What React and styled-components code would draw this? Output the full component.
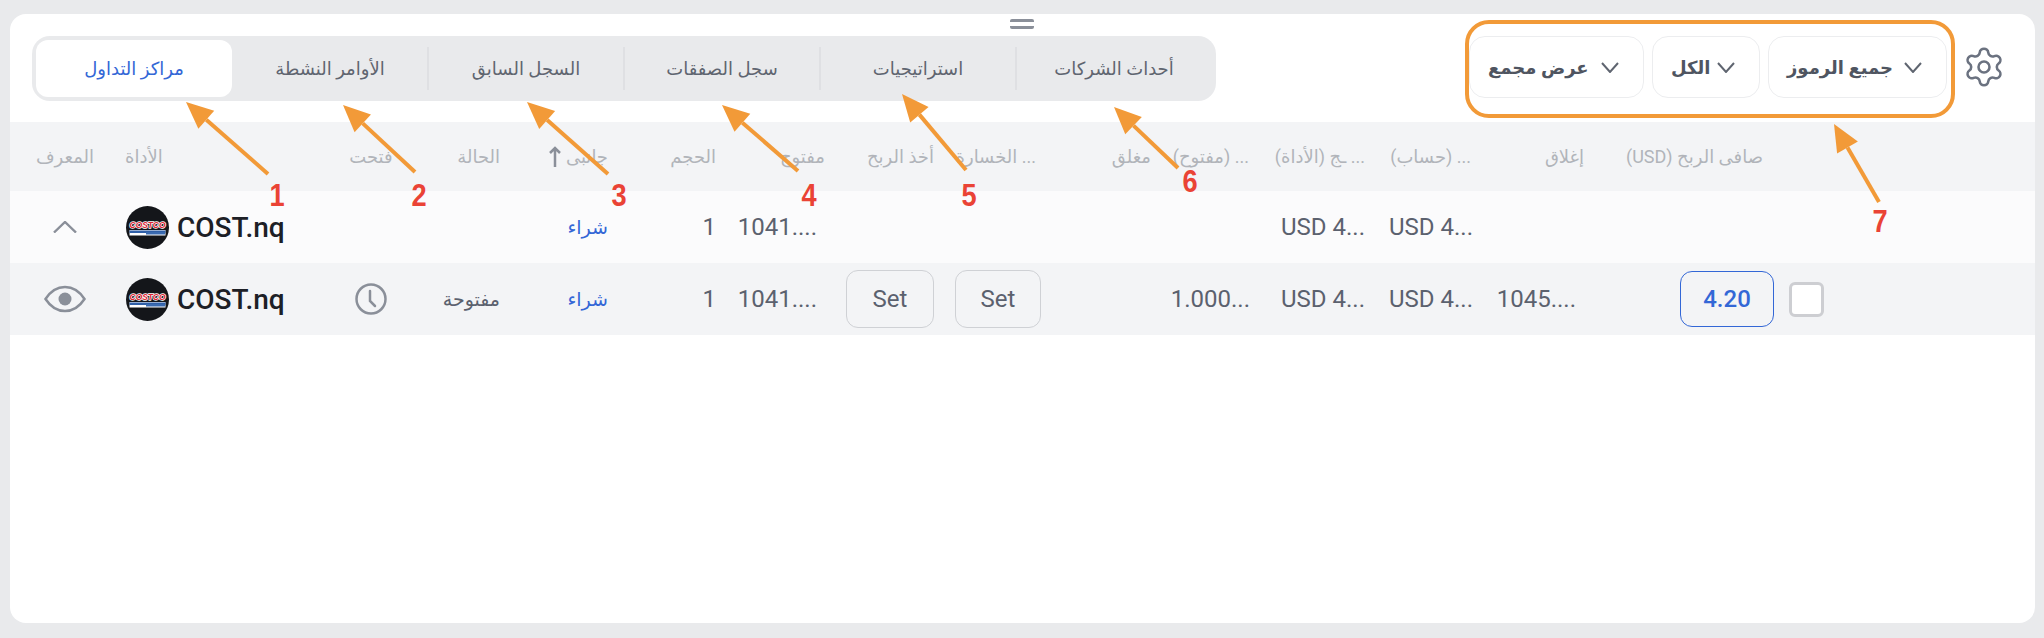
import React from "react";
import styled, { createGlobalStyle } from "styled-components";
import { Settings } from "lucide-react";

const Global = createGlobalStyle`
  html, body { margin: 0; padding: 0; background: #e9eaec; }
  body { font-family: Roboto, "Noto Sans", "DejaVu Sans", sans-serif; }
`;

const TRACKS = "110px 210px 82px 88px 108px 108px 109px 109px 107px 110px 99px 115px 108px 111px 190px 1fr";

const Page = styled.div`
  position: relative;
  width: 2044px;
  height: 638px;
  padding: 14px 9px 15px 10px;
  box-sizing: border-box;
  overflow: hidden;
`;
const Card = styled.main`
  position: relative;
  height: 100%;
  background: #fff;
  border-radius: 16px;
  overflow: hidden;
`;
const Handle = styled.div`
  position: absolute;
  top: 5px;
  left: 1000px;
  width: 24px;
  height: 10px;
  border-top: 3px solid #8a8f99;
  border-bottom: 3px solid #8a8f99;
  border-radius: 2px;
  box-sizing: border-box;
`;
const TopBar = styled.div`
  display: flex;
  align-items: flex-start;
  height: 108px;
  padding: 22px 29px 0 22px;
  box-sizing: border-box;
`;
const Tabs = styled.nav`
  display: flex;
  padding: 4px;
  background: #e9eaec;
  border-radius: 18px;
`;
const Tab = styled.div`
  position: relative;
  width: 196px;
  height: 57px;
  display: flex;
  align-items: center;
  justify-content: center;
  font-size: 18px;
  border-radius: 12px;
  color: ${p => (p.$active ? "#3367d6" : "#5f6570")};
  background: ${p => (p.$active ? "#fff" : "transparent")};
  &::after {
    content: "";
    display: ${p => (p.$sep ? "block" : "none")};
    position: absolute;
    right: -1px;
    top: 7px;
    bottom: 7px;
    width: 2px;
    background: #dfe0e3;
  }
`;
const Filters = styled.div`
  display: flex;
  gap: 8px;
  margin-left: auto;
`;
const Filter = styled.div`
  width: ${p => p.$w}px;
  height: 62px;
  display: flex;
  align-items: center;
  justify-content: space-between;
  padding: 0 24px 0 18px;
  box-sizing: border-box;
  border: 1px solid #ecedef;
  border-radius: 16px;
  font-size: 18px;
  font-weight: 700;
  white-space: nowrap;
  color: #4f5561;
`;
const Gear = styled.div`
  display: flex;
  margin: 9px 0 0 15px;
  color: #6b7280;
`;
const Row = styled.div`
  display: grid;
  grid-template-columns: ${TRACKS};
  align-items: center;
  height: ${p => p.$h}px;
  background: ${p => p.$bg};
`;
const Cell = styled.div`
  display: flex;
  align-items: center;
  justify-content: ${p => p.$j || "flex-end"};
  padding-right: ${p => p.$pr || 0}px;
  padding-left: ${p => p.$pl || 0}px;
  white-space: nowrap;
  min-width: 0;
`;
const HeadText = styled.span`
  font-size: 18px;
  color: #b1b4ba;
`;
const SortArrow = styled.svg`
  width: 14px;
  height: 24px;
  margin-right: 4px;
`;
const Value = styled.span`
  font-size: 24px;
  color: #5b616e;
`;
const Side = styled.span`
  font-size: 19px;
  color: #3367d6;
`;
const Status = styled.span`
  font-size: 19px;
  color: #5b616e;
`;
const Symbol = styled.span`
  margin-left: 8px;
  font-size: 28px;
  font-weight: 500;
  color: #1d2026;
`;
const SetButton = styled.div`
  width: ${p => p.$w}px;
  height: 58px;
  display: flex;
  align-items: center;
  justify-content: center;
  box-sizing: border-box;
  border: 1px solid #cfd1d5;
  border-radius: 12px;
  font-size: 24px;
  color: #5b616e;
`;
const Profit = styled.div`
  width: 94px;
  height: 56px;
  display: flex;
  align-items: center;
  justify-content: center;
  box-sizing: border-box;
  border: 1px solid #3367d6;
  border-radius: 12px;
  font-size: 24px;
  font-weight: 500;
  color: #3367d6;
`;
const Check = styled.div`
  width: 35px;
  height: 35px;
  box-sizing: border-box;
  background: #fff;
  border: 3px solid #cdced2;
  border-radius: 6px;
`;
const Overlay = styled.svg`
  position: absolute;
  inset: 0;
  width: 2044px;
  height: 638px;
  pointer-events: none;
`;
const Callout = styled.div`
  position: absolute;
  left: 1465px;
  top: 20px;
  width: 490px;
  height: 98px;
  box-sizing: border-box;
  border: 4px solid #f29a38;
  border-radius: 24px;
  pointer-events: none;
`;
const Mark = styled.span`
  position: absolute;
  left: ${p => p.$x - 20}px;
  top: ${p => p.$y - 20}px;
  width: 40px;
  height: 40px;
  line-height: 40px;
  text-align: center;
  font-family: "Liberation Sans", sans-serif;
  font-size: 32px;
  font-weight: 700;
  color: #ea4335;
  transform: scaleX(0.85);
`;
const LogoMark = styled.svg`
  flex: none;
  width: 43px;
  height: 43px;
`;

const Logo = () => (
  <LogoMark viewBox="0 0 43 43">
    <circle cx="21.5" cy="21.5" r="21.5" fill="#14161a" />
    <text x="21.5" y="22" textAnchor="middle" fontFamily="Liberation Sans, sans-serif" fontStyle="italic" fontWeight="700" fontSize="8.4" fill="#dc2230" stroke="#fff" strokeWidth="1.4" paintOrder="stroke">COSTCO</text>
    <rect x="3.500" y="24" width="36" height="5.500" fill="#fff" />
    <rect x="3.500" y="24.500" width="36" height="2.500" fill="#2f5fa8" />
    <rect x="20" y="26" width="19" height="2.500" fill="#3a6ab0" />
  </LogoMark>
);
const ChevronUp = () => (
  <svg width="24" height="12" viewBox="0 0 24 12"><path d="M1 11.500 12 1l11 10.500" fill="none" stroke="#8a8f99" strokeWidth="2.400" /></svg>
);
const Eye = () => (
  <svg width="42" height="28" viewBox="0 0 42 28">
    <path d="M1.500 14C7 5.500 13.500 2 21 2s14 3.500 19.500 12C35 22.500 28.500 26 21 26S7 22.500 1.500 14Z" fill="none" stroke="#8a8f99" strokeWidth="2.500" />
    <circle cx="21" cy="14" r="6.500" fill="#8a8f99" />
  </svg>
);
const Clock = () => (
  <svg width="32" height="32" viewBox="0 0 32 32" fill="none" stroke="#8a8f99" strokeWidth="2.500">
    <circle cx="16" cy="16" r="14.500" />
    <path d="M15 8v10l5 5" strokeLinecap="round" />
  </svg>
);
const Chevron = () => (
  <svg width="18" height="11" viewBox="0 0 18 11" style={{ flex: "none" }}><path d="M1 1l8 9 8-9" fill="none" stroke="#5f6570" strokeWidth="2" /></svg>
);

const arrows = [
  [268, 174, 186, 102], [415, 172, 343, 105], [608, 174, 527, 102],
  [798, 171, 722, 105], [966, 170, 902, 94], [1178, 168, 1114, 107], [1879, 202, 1834, 124],
];
const marks = [[1, 277, 195], [2, 419, 195], [3, 619, 195], [4, 809, 195], [5, 969, 195], [6, 1190, 181], [7, 1880, 221]];

const Arrow = ({ a }) => {
  const [x1, y1, x2, y2] = a;
  const len = Math.hypot(x2 - x1, y2 - y1);
  const ux = (x2 - x1) / len, uy = (y2 - y1) / len;
  const bx = x2 - ux * 27, by = y2 - uy * 27;
  const head = `${x2},${y2} ${bx - uy * 12},${by + ux * 12} ${bx + uy * 12},${by - ux * 12}`;
  return (
    <g>
      <line x1={x1} y1={y1} x2={bx} y2={by} stroke="#f29a38" strokeWidth="4" />
      <polygon points={head} fill="#f29a38" />
    </g>
  );
};

const heads = [
  ["المعرف", "center"], ["الأداة", "flex-start", 0, 5], ["فتحت", "center"], ["الحالة"], ["جانبى"], ["الحجم"], ["مفتوح"],
  ["أخذ الربح"], ["الخسارة ...", "flex-end", 5], ["مغلق"], ["(مفتوح) ...", "flex-end", 1], ["ـج (الأداة) ...", "flex-end", 0],
  ["(حساب) ...", "flex-end", 2], ["إغلاق"], ["(USD) صافى الربح", "flex-end", 11], [""],
];

const Position = ({ bg, open }) => (
  <Row $h={72} $bg={bg}>
    <Cell $j="center">{open ? <Eye /> : <ChevronUp />}</Cell>
    <Cell $j="flex-start" $pl={6}><Logo /><Symbol>COST.nq</Symbol></Cell>
    <Cell $j="center">{open && <Clock />}</Cell>
    <Cell>{open && <Status>مفتوحة</Status>}</Cell>
    <Cell><Side>شراء</Side></Cell>
    <Cell><Value>1</Value></Cell>
    <Cell $pr={8}><Value>1041....</Value></Cell>
    <Cell>{open && <SetButton $w={88}>Set</SetButton>}</Cell>
    <Cell>{open && <SetButton $w={86}>Set</SetButton>}</Cell>
    <Cell />
    <Cell>{open && <Value>1.000...</Value>}</Cell>
    <Cell><Value>USD 4...</Value></Cell>
    <Cell><Value>USD 4...</Value></Cell>
    <Cell $pr={8}>{open && <Value>1045....</Value>}</Cell>
    <Cell>{open && <Profit>4.20</Profit>}</Cell>
    <Cell $j="flex-start" $pl={15}>{open && <Check />}</Cell>
  </Row>
);

export default function App() {
  return (
    <Page>
      <Global />
      <Card>
        <Handle />
        <TopBar>
          <Tabs>
            <Tab $active>مراكز التداول</Tab>
            <Tab $sep>الأوامر النشطة</Tab>
            <Tab $sep>السجل السابق</Tab>
            <Tab $sep>سجل الصفقات</Tab>
            <Tab $sep>استراتيجيات</Tab>
            <Tab>أحداث الشركات</Tab>
          </Tabs>
          <Filters>
            <Filter $w={175}>عرض مجمع<Chevron /></Filter>
            <Filter $w={108}>الكل<Chevron /></Filter>
            <Filter $w={179}>جميع الرموز<Chevron /></Filter>
          </Filters>
          <Gear><Settings size={44} strokeWidth={1.4} /></Gear>
        </TopBar>
        <Row $h={69} $bg="#f3f4f6">
          {heads.map(([t, j, pr, pl], i) => (
            <Cell key={i} $j={j} $pr={pr} $pl={pl}>
              {i === 4 && (
                <SortArrow viewBox="0 0 14 24"><path d="M7 22V3M2 8l5-5 5 5" fill="none" stroke="#8a8f99" strokeWidth="2.500" /></SortArrow>
              )}
              <HeadText>{t}</HeadText>
            </Cell>
          ))}
        </Row>
        <Position bg="#fbfbfc" />
        <Position bg="#f3f4f6" open />
      </Card>
      <Callout />
      <Overlay viewBox="0 0 2044 638">
        {arrows.map((a, i) => <Arrow key={i} a={a} />)}
      </Overlay>
      {marks.map(([n, x, y]) => <Mark key={n} $x={x} $y={y}>{n}</Mark>)}
    </Page>
  );
}
